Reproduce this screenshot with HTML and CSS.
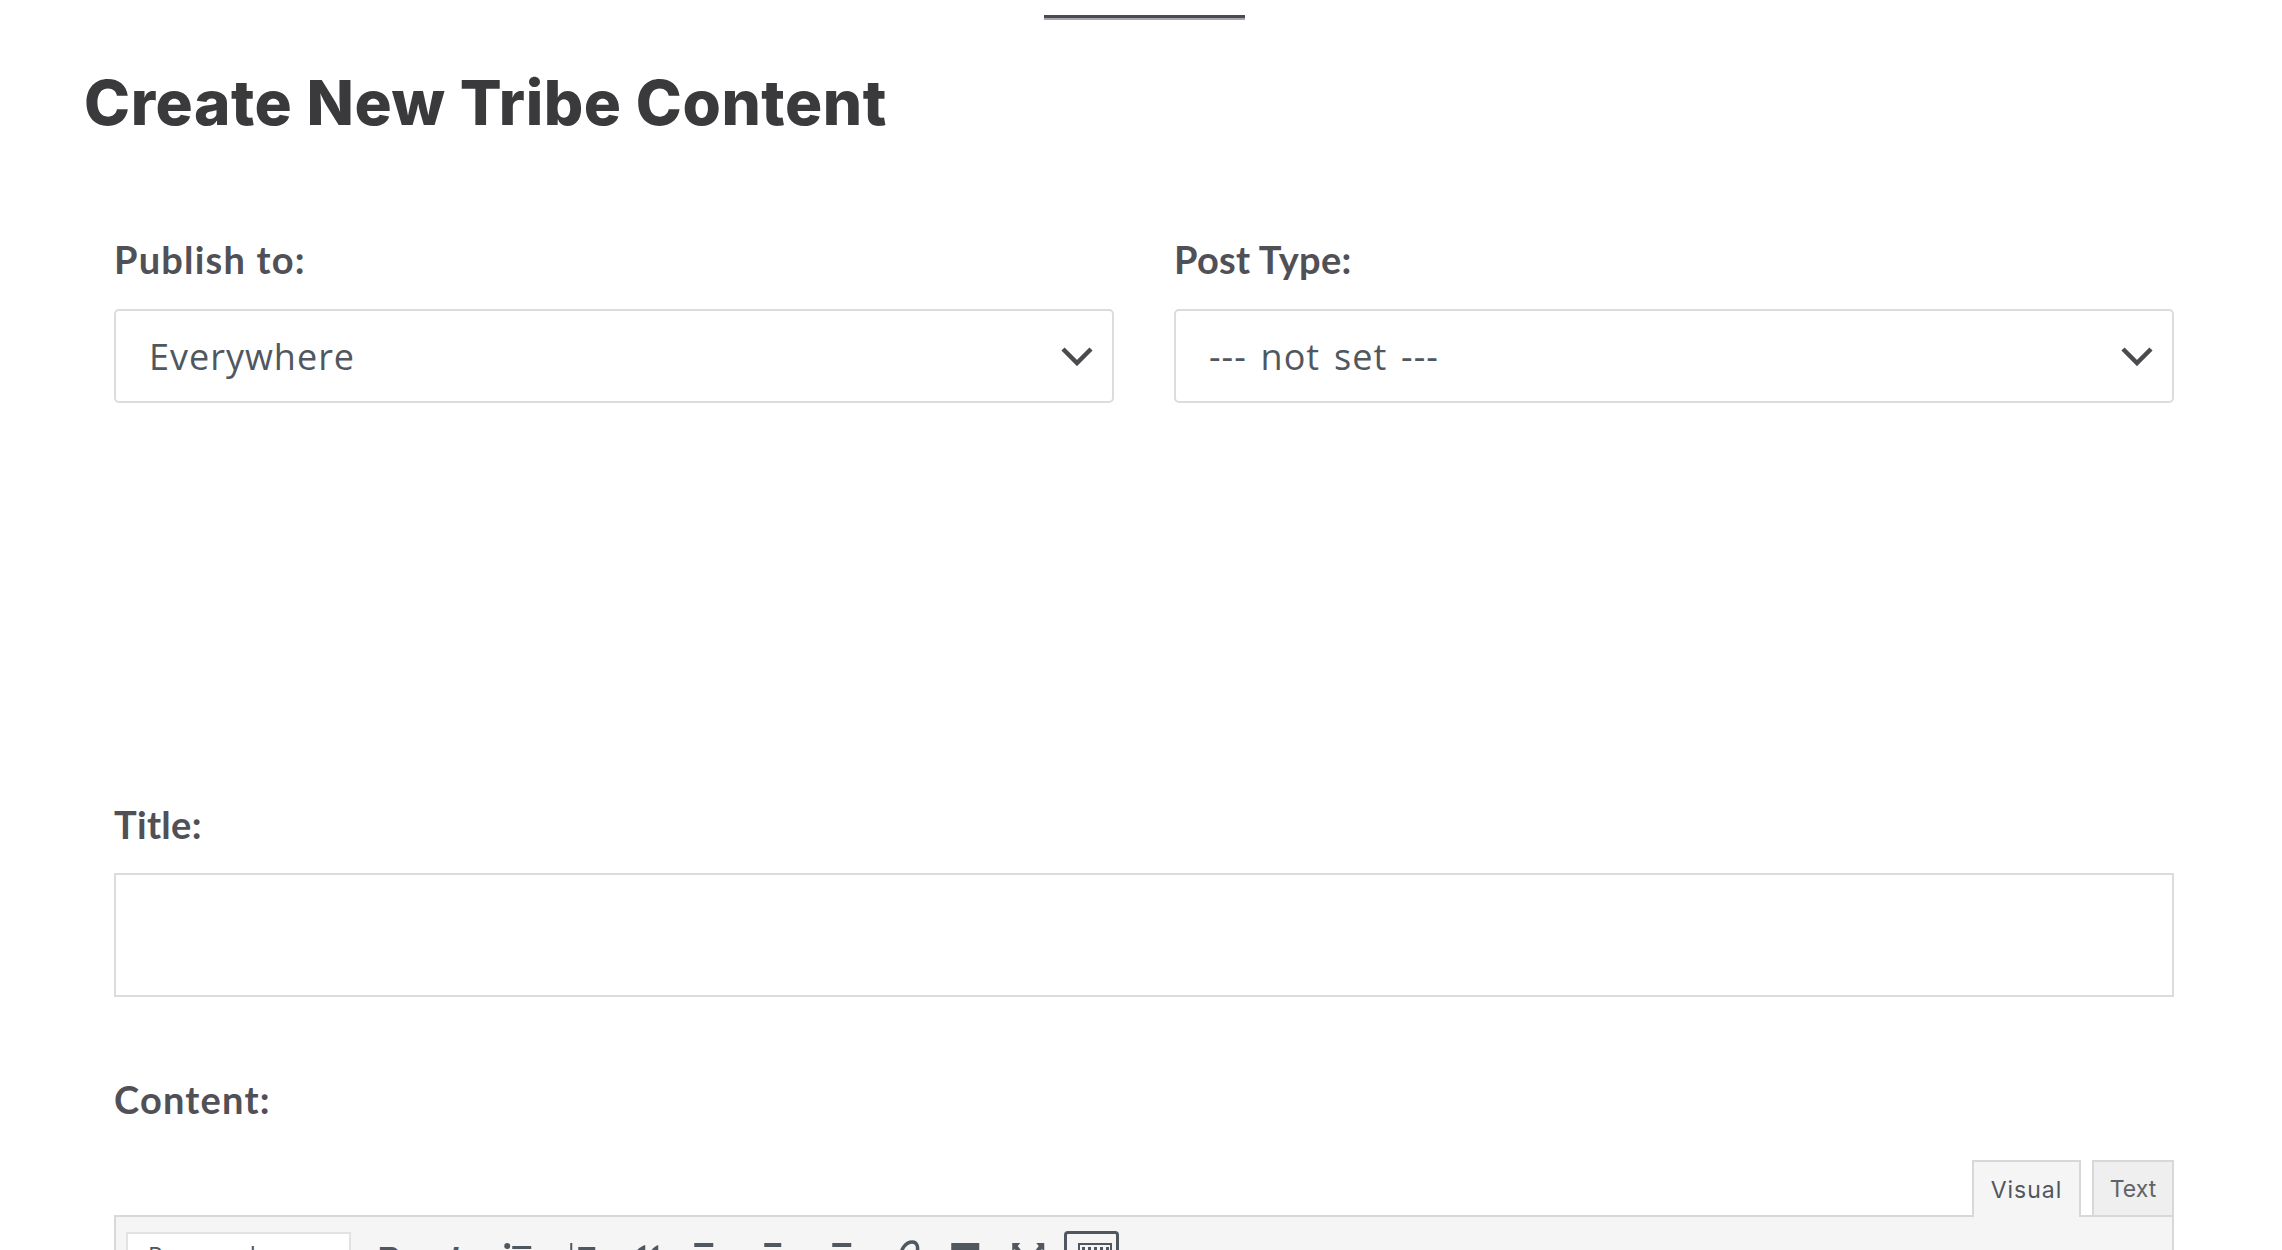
FILE: index.html
```html
<!DOCTYPE html>
<html lang="en">
<head>
<meta charset="utf-8">
<title>Create New Tribe Content</title>
<link rel="stylesheet" href="styles.css">
</head>
<body>
<main class="page">
  <div class="handle"></div>
  <h1 class="heading">Create New Tribe Content</h1>
  <section class="form">
    <div class="selects">
      <div class="field">
        <label class="label label-wide">Publish to:</label>
        <div class="select"><span>Everywhere</span>
          <svg class="chev" width="32" height="20" viewBox="0 0 32 20"><path d="M2 3 L16 17 L30 3" fill="none" stroke="#4a4a4f" stroke-width="4.5"/></svg>
        </div>
      </div>
      <div class="field">
        <label class="label">Post Type:</label>
        <div class="select"><span>--- not set ---</span>
          <svg class="chev" width="32" height="20" viewBox="0 0 32 20"><path d="M2 3 L16 17 L30 3" fill="none" stroke="#4a4a4f" stroke-width="4.5"/></svg>
        </div>
      </div>
    </div>
    <label class="label title-label">Title:</label>
    <div class="title-input"></div>
    <label class="label label-wide content-label">Content:</label>
    <div class="tabs">
      <div class="tab active">Visual</div>
      <div class="tab">Text</div>
    </div>
    <div class="toolbar">
      <div class="format">Paragraph</div>
      <div class="tool-icons">
        <span class="ti t-b">B</span>
        <span class="ti t-i">I</span>
        <svg class="cell" viewBox="0 0 64 20"><g fill="#50575e"><circle cx="21" cy="6" r="3"/><rect x="26" y="6" width="19" height="3"/></g></svg>
        <svg class="cell" viewBox="0 0 64 20"><g fill="#50575e"><rect x="19" y="3" width="2" height="8"/><rect x="27" y="7" width="17" height="3"/></g></svg>
        <svg class="cell" viewBox="0 0 64 20"><g fill="#50575e"><path d="M18 20 C18 12 24 7 30 5 L30 20 Z"/><path d="M33 20 C33 12 38 7 43 5 L43 20 Z"/></g></svg>
        <svg class="cell" viewBox="0 0 64 20"><rect x="14" y="3" width="19" height="4" fill="#50575e"/></svg>
        <svg class="cell" viewBox="0 0 64 20"><rect x="20" y="3" width="17" height="4" fill="#50575e"/></svg>
        <svg class="cell" viewBox="0 0 64 20"><rect x="23" y="3" width="19" height="4" fill="#50575e"/></svg>
        <svg class="cell" viewBox="0 0 64 20"><path d="M27 20 C27 8 33 2 39 2 C44 2 45 7 44 12" fill="none" stroke="#50575e" stroke-width="3.5"/></svg>
        <svg class="cell" viewBox="0 0 64 20"><rect x="13" y="3" width="28" height="17" fill="#50575e"/></svg>
        <svg class="cell" viewBox="0 0 64 20"><g fill="#50575e"><path d="M10 3 H18 L15.5 6 L20 12 L16 15 L12.5 9 L10 11 Z"/><path d="M42 3 H34 L36.5 6 L32 12 L36 15 L39.5 9 L42 11 Z"/></g></svg>
        <div class="kbd"><svg class="kbd-glyph" viewBox="0 0 34 10"><rect x="1" y="1" width="32" height="12" fill="none" stroke="#50575e" stroke-width="2"/><path d="M4 4h3v3H4zM10 4h3v3h-3zM16 4h3v3h-3zM22 4h3v3h-3zM28 4h3v3h-3z" fill="#50575e"/></svg></div>
      </div>
    </div>
  </section>
</main>
</body>
</html>
```
FILE: styles.css
```css
* { box-sizing: border-box; }
html, body { margin: 0; padding: 0; background: #fff; }
body { height: 1250px; overflow: hidden; font-family: "Open Sans", "Liberation Sans", sans-serif; }
.page { height: 1250px; overflow: hidden; padding-top: 15px; }
.handle { width: 201px; height: 5px; margin-left: 1044px; background: linear-gradient(#4a4a50 70%, #a8a8ac 70%); }
.heading { margin: 48px 0 0 84px; font-family: Inter, sans-serif; font-weight: 800; font-size: 62px; line-height: 70px; letter-spacing: 0.56px; color: #3a3a3c; }
.form { padding: 0 108px 0 114px; }
.selects { display: grid; grid-template-columns: 1000px 1000px; column-gap: 60px; margin-top: 99px; }
.label { display: block; font-family: Lato, sans-serif; font-weight: 700; font-size: 38px; line-height: 44px; letter-spacing: 0.3px; color: #505056; }
.label-wide { letter-spacing: 1.2px; }
.select { display: flex; align-items: center; justify-content: space-between; height: 94px; margin-top: 28px; padding: 0 19px 0 33px; border: 2px solid #dcdcdc; border-radius: 5px; font-family: "Open Sans", sans-serif; font-size: 36px; letter-spacing: 1px; word-spacing: 3.5px; color: #50575e; }
.title-label { margin-top: 399px; }
.title-input { height: 124px; margin-top: 27px; border: 2px solid #dcdcdc; }
.content-label { margin-top: 80px; }
.tabs { display: flex; justify-content: flex-end; gap: 11px; margin-top: 39px; height: 55px; }
.tab { display: flex; align-items: center; justify-content: center; width: 82px; height: 55px; border: 2px solid #d8d8d8; border-bottom: 0; background: #efefef; font-family: Inter, sans-serif; font-size: 23px; color: #5f6368; }
.tab.active { width: 109px; height: 57px; background: #f5f5f5; color: #50575e; position: relative; z-index: 1; letter-spacing: 1px; }
.toolbar { display: flex; align-items: flex-start; height: 100px; padding: 15px 0 0 10px; background: #f5f5f5; border: 2px solid #d8d8d8; border-bottom: 0; }
.format { flex: none; width: 225px; height: 60px; padding: 4px 0 0 20px; background: #fff; border: 2px solid #e2e2e2; font-family: "Open Sans", sans-serif; font-size: 24px; color: #50575e; }
.tool-icons { display: flex; align-items: flex-start; margin-left: 6px; }
.ti { flex: none; width: 64.5px; padding-top: 9px; font-family: "Liberation Sans", sans-serif; font-size: 32px; font-weight: 700; line-height: 34px; color: #50575e; text-align: center; }
.t-i { font-style: italic; }
.cell { flex: none; display: block; width: 64.5px; height: 20px; margin-top: 8px; }
.kbd { flex: none; width: 55px; height: 40px; margin: -1px 0 0 -2.5px; padding: 9px 0 0 11px; border: 3px solid #50575e; border-radius: 4px; }
.kbd-glyph { display: block; width: 34px; height: 10px; }
```
